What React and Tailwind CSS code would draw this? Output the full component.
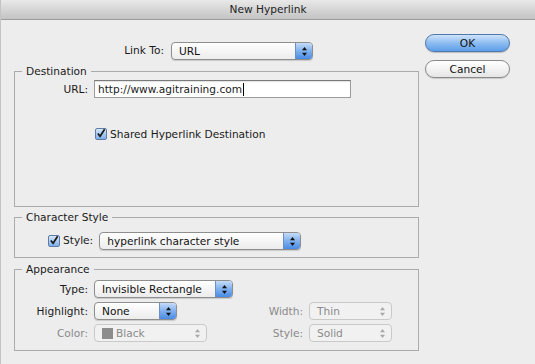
import React from 'react';

const Arrows = ({ color = '#111' }) => (
    <svg width="7" height="11" viewBox="0 0 7 11">
        <path d="M3.5 1 L6 4.2 L1 4.2 Z" fill={color} />
        <path d="M3.5 10 L6 6.8 L1 6.8 Z" fill={color} />
    </svg>
);

const Popup = ({ value, width, disabled, swatch }) => (
    <div
        className={`flex h-[18px] items-stretch rounded-[4px] border ${disabled
            ? 'border-[#c9c9c9] bg-[#f1f1f1] text-[#8a8a8a]'
            : 'border-[#8e8e8e] bg-gradient-to-b from-white to-[#ececec] text-[#111] shadow-[0_1px_1px_rgba(0,0,0,0.15)]'
            }`}
        style={{ width }}
    >
        <div className="flex flex-1 items-center pl-[7px] leading-none">
            {swatch && <span className="mr-[3px] inline-block h-[11px] w-[11px] bg-[#8c8c8c]" />}
            {value}
        </div>
        <div
            className={`flex w-[17px] items-center justify-center rounded-r-[3px] ${disabled
                ? ''
                : 'border-l border-[#6d8fc0] bg-gradient-to-b from-[#c6dcf7] via-[#7fb0ee] to-[#4a8be3]'
                }`}
        >
            <Arrows color={disabled ? '#a8a8a8' : '#111'} />
        </div>
    </div>
);

const Checkbox = () => (
    <div className="flex h-[12px] w-[12px] items-center justify-center rounded-[2px] border border-[#5f7ea6] bg-gradient-to-b from-[#d5e6fa] to-[#7fb0ea]">
        <svg width="11" height="11" viewBox="0 0 11 11" className="-mt-[2px]">
            <path d="M2 5.5 L4.5 8.5 L9.5 0.8" fill="none" stroke="#1a1a1a" strokeWidth="1.9" />
        </svg>
    </div>
);

const Group = ({ title, height, className = '', children }) => (
    <fieldset
        className={`border border-[#ababab] ${className}`}
        style={{ height }}
    >
        <legend className="ml-[7px] px-[4px] leading-[14px]">{title}</legend>
        {children}
    </fieldset>
);

const Label = ({ children, w = 73, muted }) => (
    <div
        className={`shrink-0 text-right leading-[18px] ${muted ? 'text-[#8a8a8a]' : ''}`}
        style={{ width: w }}
    >
        {children}
    </div>
);

export default function App() {
    return (
        <div className="h-[364px] w-[535px] overflow-hidden border-l border-[#c4c4c4] bg-[#ededed] font-['DejaVu_Sans',sans-serif] text-[10.6px] text-[#1a1a1a]">
            {/* Title bar */}
            <div className="flex h-[20px] items-center justify-center border-b border-[#9c9c9c] bg-gradient-to-b from-[#e9e9e9] to-[#c3c3c3] text-[#222]">
                New Hyperlink
            </div>

            <div className="flex pl-[13px]">
                {/* Left column */}
                <div className="w-[405px]">
                    <div className="mt-[22px] flex items-center">
                        <div className="w-[150px] text-right">Link To:</div>
                        <div className="ml-[7px]">
                            <Popup value="URL" width={142} />
                        </div>
                    </div>

                    <Group title="Destination" height={143} className="mt-[4px]">
                        <div className="mt-[2px] flex">
                            <Label>URL:</Label>
                            <div className="ml-[6px] flex h-[18px] w-[257px] items-center border border-[#9c9c9c] border-t-[#7a7a7a] bg-white pl-[3px] leading-none shadow-[inset_0_1px_1px_rgba(0,0,0,0.12)]">
                                http://www.agitraining.com
                                <span className="ml-[1px] inline-block h-[13px] w-px bg-black" />
                            </div>
                        </div>
                        <div className="mt-[29px] flex items-center pl-[80px]">
                            <Checkbox />
                            <span className="ml-[3px] leading-[14px]">Shared Hyperlink Destination</span>
                        </div>
                    </Group>

                    <Group title="Character Style" height={48} className="mt-[3px]">
                        <div className="mt-[8px] flex items-center pl-[33px]">
                            <Checkbox />
                            <span className="ml-[3px]">Style:</span>
                            <div className="ml-[6px]">
                                <Popup value="hyperlink character style" width={202} />
                            </div>
                        </div>
                    </Group>

                    <Group title="Appearance" height={89} className="mt-[4px]">
                        <div className="mt-[4px] flex flex-col gap-[4px]">
                            <div className="flex">
                                <Label>Type:</Label>
                                <div className="ml-[6px]">
                                    <Popup value="Invisible Rectangle" width={139} />
                                </div>
                            </div>
                            <div className="flex">
                                <Label>Highlight:</Label>
                                <div className="ml-[6px] w-[150px]">
                                    <Popup value="None" width={83} />
                                </div>
                                <Label w={59} muted>Width:</Label>
                                <div className="ml-[6px]">
                                    <Popup value="Thin" width={83} disabled />
                                </div>
                            </div>
                            <div className="flex">
                                <Label muted>Color:</Label>
                                <div className="ml-[6px] w-[150px]">
                                    <Popup value="Black" width={113} disabled swatch />
                                </div>
                                <Label w={59} muted>Style:</Label>
                                <div className="ml-[6px]">
                                    <Popup value="Solid" width={83} disabled />
                                </div>
                            </div>
                        </div>
                    </Group>
                </div>

                {/* Buttons */}
                <div className="ml-[6px] flex w-[85px] flex-col">
                    <button className="mt-[14px] h-[18px] rounded-full border border-[#4f78ad] bg-gradient-to-b from-[#cfe3fa] via-[#8dbcf0] to-[#5d9eea] leading-none text-[#111] shadow-[0_1px_1px_rgba(0,0,0,0.2)]">
                        OK
                    </button>
                    <button className="mt-[8px] h-[18px] rounded-full border border-[#8a8a8a] bg-gradient-to-b from-white to-[#e6e6e6] leading-none text-[#111] shadow-[0_1px_1px_rgba(0,0,0,0.15)]">
                        Cancel
                    </button>
                </div>
            </div>
        </div>
    );
}
